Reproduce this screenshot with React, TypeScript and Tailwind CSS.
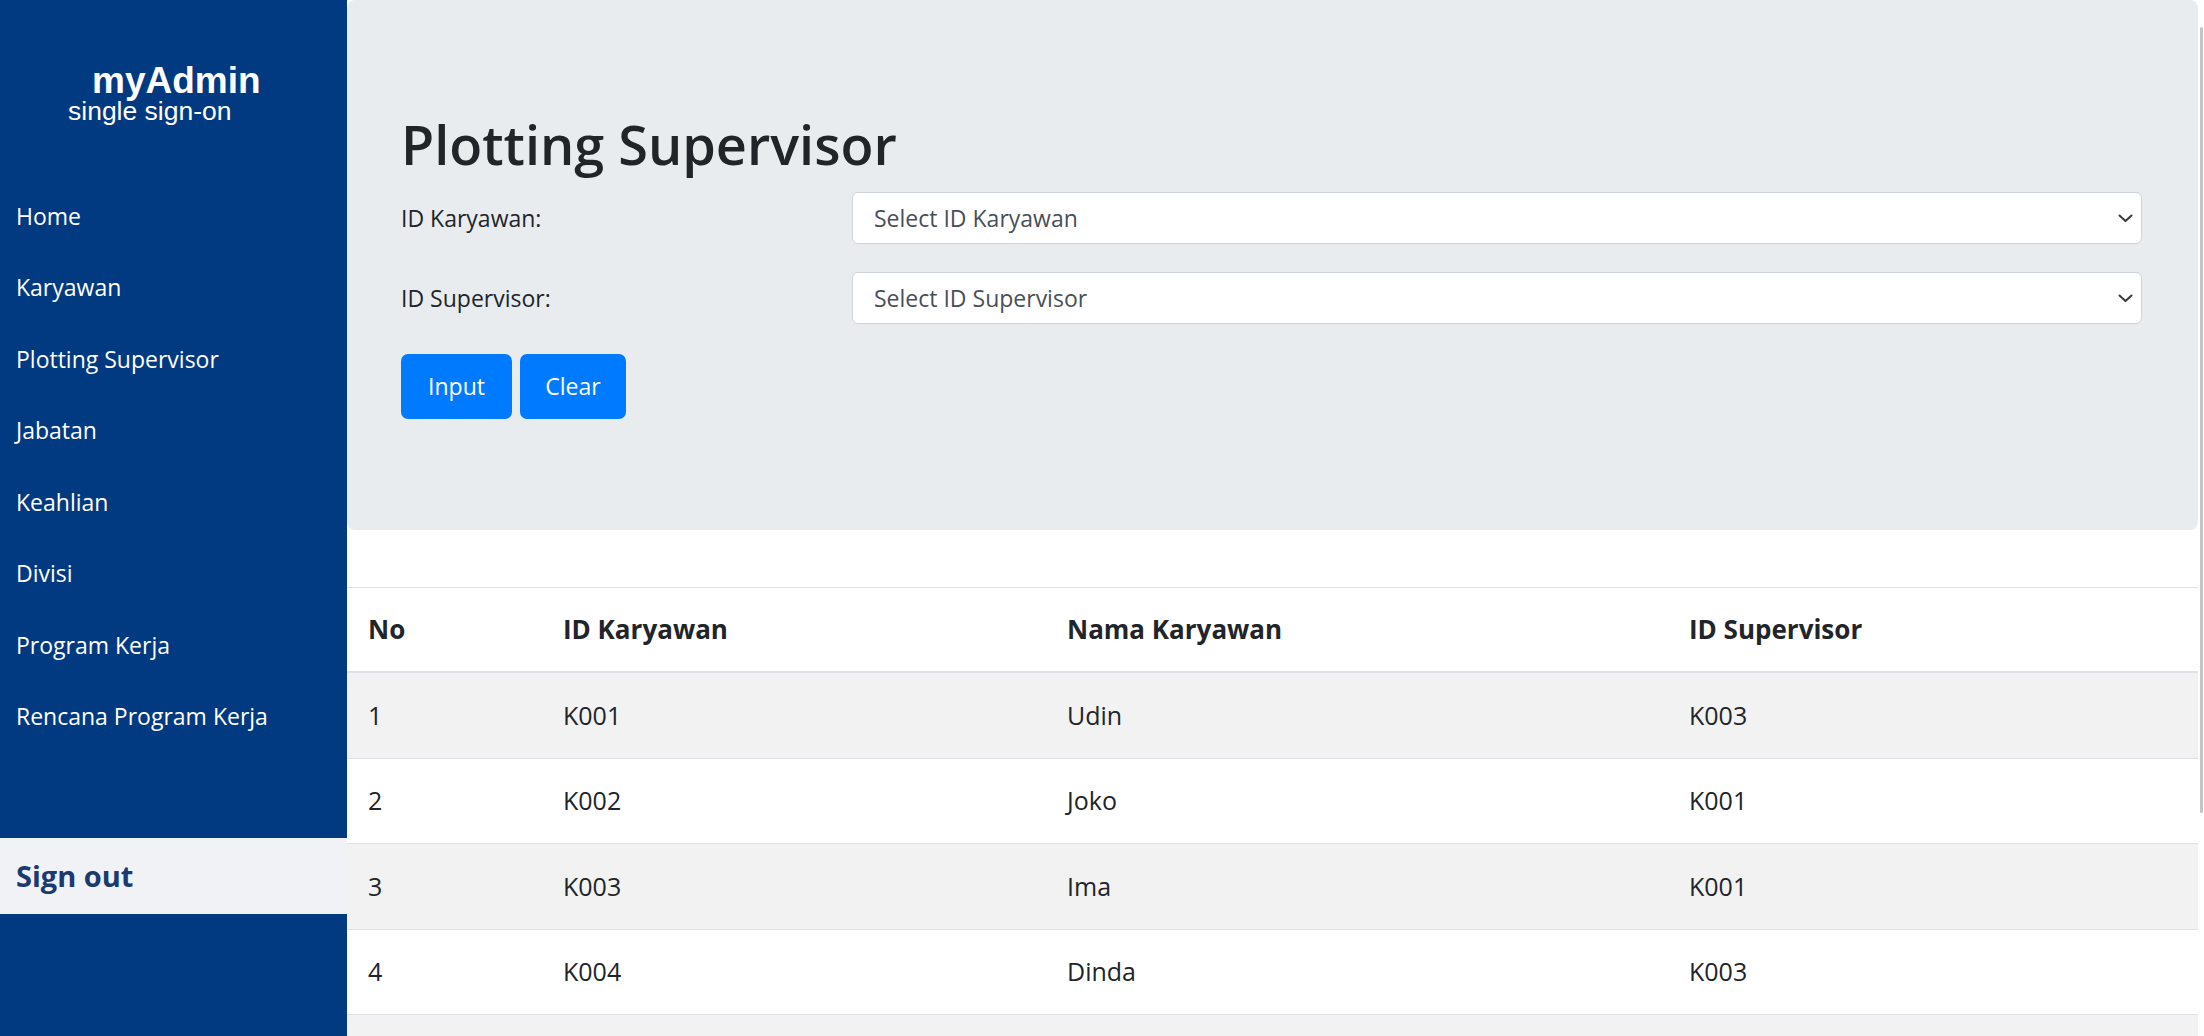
const navItems = [
  "Home",
  "Karyawan",
  "Plotting Supervisor",
  "Jabatan",
  "Keahlian",
  "Divisi",
  "Program Kerja",
  "Rencana Program Kerja",
];

const rows = [
  { no: "1", id: "K001", nama: "Udin", spv: "K003" },
  { no: "2", id: "K002", nama: "Joko", spv: "K001" },
  { no: "3", id: "K003", nama: "Ima", spv: "K001" },
  { no: "4", id: "K004", nama: "Dinda", spv: "K003" },
  { no: "", id: "", nama: "", spv: "" },
];

function Chevron() {
  return (
    <svg width="15" height="9" viewBox="0 0 15 9" fill="none">
      <polyline
        points="1.5,1.5 7.5,7 13.5,1.5"
        stroke="#343a40"
        strokeWidth="2"
        strokeLinecap="round"
        strokeLinejoin="round"
      />
    </svg>
  );
}

function SelectBox({ placeholder }: { placeholder: string }) {
  return (
    <div className="flex h-[52px] flex-1 items-center justify-between rounded-[6px] border border-[#ced4da] bg-white pl-[21px] pr-[8px] text-[23px] text-[#495057]">
      <span>{placeholder}</span>
      <Chevron />
    </div>
  );
}

export default function App() {
  return (
    <div className="flex h-[1036px] w-[2204px] overflow-hidden bg-white font-['Open_Sans',sans-serif] text-[#212529]">
      {/* Sidebar */}
      <aside className="flex w-[347px] shrink-0 flex-col bg-[#023a82] text-white">
        <div className="h-[180px] shrink-0 pt-[63px] font-['Liberation_Sans',Arial,sans-serif]">
          <div className="ml-[92px] text-[37px] font-bold leading-[35px]">myAdmin</div>
          <div className="ml-[68px] text-[26.5px] leading-[26px]">single sign-on</div>
        </div>

        <nav className="flex shrink-0 flex-col">
          {navItems.map((item) => (
            <a key={item} className="flex h-[71.5px] items-center pl-4 text-[23px]">
              {item}
            </a>
          ))}
        </nav>

        {/* Sign out */}
        <div className="mt-[86px] flex h-[76px] shrink-0 items-center bg-[#f0f2f5] pl-4 text-[29px] font-bold text-[#1a3a70]">
          Sign out
        </div>
      </aside>

      {/* Main */}
      <main className="flex min-w-0 flex-1 flex-col">
        <section className="h-[530px] shrink-0 rounded-lg bg-[#e9ecef] pl-[54px] pr-[56px] pt-[111px]">
          <h1 className="text-[54px] font-semibold leading-[66px]">Plotting Supervisor</h1>

          <div className="mt-[15px] flex items-center">
            <label className="w-[451px] text-[23px]">ID Karyawan:</label>
            <SelectBox placeholder="Select ID Karyawan" />
          </div>

          <div className="mt-[28px] flex items-center">
            <label className="w-[451px] text-[23px]">ID Supervisor:</label>
            <SelectBox placeholder="Select ID Supervisor" />
          </div>

          <div className="mt-[30px] flex gap-2">
            <button className="h-[65px] w-[111px] rounded-[7px] bg-[#007bff] text-[23px] text-white">
              Input
            </button>
            <button className="h-[65px] w-[106px] rounded-[7px] bg-[#007bff] text-[23px] text-white">
              Clear
            </button>
          </div>
        </section>

        {/* Table */}
        <div className="mt-[57px] shrink-0 text-[25px]">
          <div className="grid h-[86px] grid-cols-[198px_503px_622px_1fr] items-center border-t border-b-2 border-[#dee2e6] text-[26px] font-bold">
            <div className="pl-[21px]">No</div>
            <div className="pl-[18px]">ID Karyawan</div>
            <div className="pl-[19px]">Nama Karyawan</div>
            <div className="pl-[19px]">ID Supervisor</div>
          </div>
          {rows.map((r, i) => (
            <div
              key={i}
              className={
                "grid h-[85.5px] grid-cols-[198px_503px_622px_1fr] items-center border-b border-[#dee2e6] " +
                (i % 2 === 0 ? "bg-[#f2f2f2]" : "bg-white")
              }
            >
              <div className="pl-[21px]">{r.no}</div>
              <div className="pl-[18px]">{r.id}</div>
              <div className="pl-[19px]">{r.nama}</div>
              <div className="pl-[19px]">{r.spv}</div>
            </div>
          ))}
        </div>
      </main>

      {/* Scrollbar */}
      <div className="w-[6px] shrink-0 bg-white pl-[2px]">
        <div className="mt-[27px] h-[786px] w-[3px] rounded-sm bg-[#c4c4c4]" />
      </div>
    </div>
  );
}
